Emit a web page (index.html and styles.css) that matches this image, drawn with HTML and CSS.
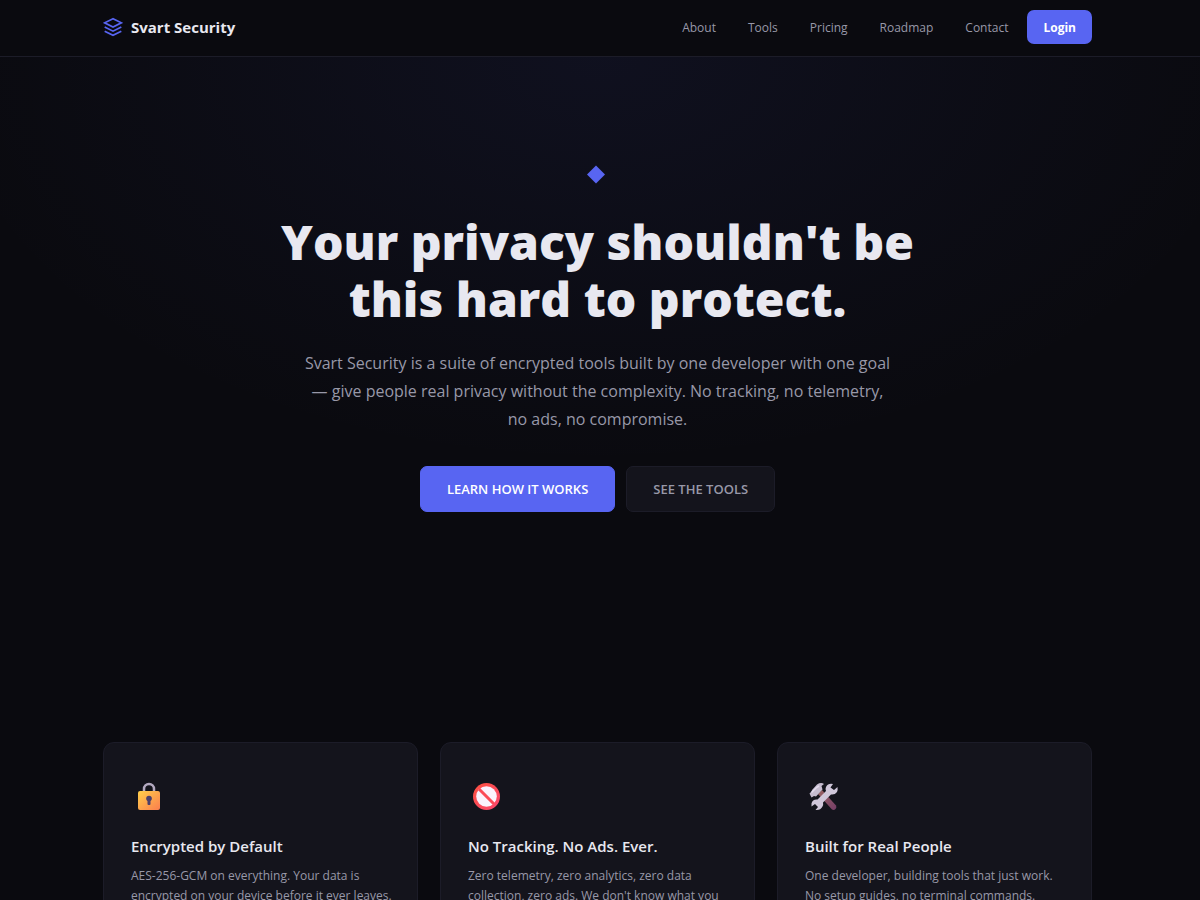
FILE: index.html
```html
<!DOCTYPE html>
<html lang="en">
<head>
  <meta charset="UTF-8">
  <meta name="viewport" content="width=device-width, initial-scale=1.0">
  <title>Svart Security</title>
  <link rel="stylesheet" href="styles.css">
</head>
<body>
  <nav class="nav">
    <div class="nav-inner">
      <a href="#" class="logo">
        <svg width="20" height="20" viewBox="0 0 24 24" fill="none" stroke="currentColor" stroke-width="2" aria-hidden="true">
          <path d="M12 2L2 7l10 5 10-5-10-5z"/>
          <path d="M2 12l10 5 10-5"/>
          <path d="M2 17l10 5 10-5"/>
        </svg>
        <span>Svart Security</span>
      </a>
      <div class="nav-links">
        <a href="#about">About</a>
        <a href="#tools">Tools</a>
        <a href="#pricing">Pricing</a>
        <a href="#roadmap">Roadmap</a>
        <a href="#contact">Contact</a>
        <a href="#login" class="nav-login">Login</a>
      </div>
    </div>
  </nav>

  <header class="hero">
    <svg class="hero-mark" width="24" height="20" viewBox="0 0 24 20" aria-hidden="true">
      <path d="M10 0.500l9 9-9 9-9-9z" fill="currentColor"/>
    </svg>
    <h1>Your privacy shouldn't be this hard to protect.</h1>
    <p>Svart Security is a suite of encrypted tools built by one developer with one goal — give people real privacy without the complexity. No tracking, no telemetry, no ads, no compromise.</p>
    <div class="hero-actions">
      <a href="#about" class="btn btn-primary">Learn how it works</a>
      <a href="#tools" class="btn btn-ghost">See the tools</a>
    </div>
  </header>

  <section class="features" id="about">
    <article class="card">
      <svg class="card-icon" width="36" height="36" viewBox="0 0 36 36" aria-hidden="true">
        <defs>
          <linearGradient id="lockBody" x1="0" y1="0" x2="1" y2="1">
            <stop offset="0" stop-color="#ffcf4a"/>
            <stop offset="1" stop-color="#fb7d4e"/>
          </linearGradient>
        </defs>
        <path d="M13 14v-4a5 5 0 0 1 10 0v4" fill="none" stroke="#b3a9c0" stroke-width="2.500"/>
        <rect x="7" y="12" width="22" height="19" rx="2" fill="url(#lockBody)"/>
        <circle cx="18" cy="19.500" r="2.800" fill="#4a3f6b"/>
        <rect x="16.500" y="20" width="3" height="6" rx="1" fill="#4a3f6b"/>
      </svg>
      <h3>Encrypted by Default</h3>
      <p>AES-256-GCM on everything. Your data is encrypted on your device before it ever leaves.</p>
    </article>
    <article class="card">
      <svg class="card-icon" width="36" height="36" viewBox="0 0 36 36" aria-hidden="true">
        <defs>
          <linearGradient id="banRing" x1="0" y1="0" x2="1" y2="1">
            <stop offset="0" stop-color="#ff5240"/>
            <stop offset="1" stop-color="#f9456f"/>
          </linearGradient>
        </defs>
        <circle cx="18.500" cy="17.500" r="13.5" fill="url(#banRing)"/>
        <circle cx="18.500" cy="17.500" r="10.3" fill="#fbf2fd"/>
        <path d="M11 10l15 15" stroke="#fb4a57" stroke-width="3"/>
      </svg>
      <h3>No Tracking. No Ads. Ever.</h3>
      <p>Zero telemetry, zero analytics, zero data collection, zero ads. We don't know what you</p>
    </article>
    <article class="card">
      <svg class="card-icon" width="36" height="36" viewBox="0 0 36 36" aria-hidden="true">
        <defs>
          <linearGradient id="handle" x1="0" y1="0" x2="1" y2="1">
            <stop offset="0" stop-color="#9a6463"/>
            <stop offset="1" stop-color="#753d66"/>
          </linearGradient>
        </defs>
        <path d="M13 15l4-4 14 15.500q1 2-.5 3.500t-3.500.5z" fill="url(#handle)"/>
        <path d="M4.500 14.500l2-2 .5-1.500 5-5.500q4-2.500 7-.5l-2.500 2 1 3.500-6.500 7-2-.5-2.500 1.500z" fill="#c6bccf"/>
        <path d="M6.500 13.500l5-5 2.500-1.500" fill="none" stroke="#e4dced" stroke-width="1.500"/>
        <path d="M28 5q-5-1-7 3-1 2 0 4l-8.500 8.500q-5-.5-6 4v3l3.500-2.500 3 3-2.500 3q5 .5 7-3.500 1-2 .5-4l8-8q4 .5 6-2.500 1-2 .5-5l-3.500 3-3.500-2.500z" fill="#d0c7da"/>
      </svg>
      <h3>Built for Real People</h3>
      <p>One developer, building tools that just work. No setup guides, no terminal commands.</p>
    </article>
  </section>
</body>
</html>
```
FILE: styles.css
```css
:root {
  --bg: #0a0a0f;
  --surface: #14141c;
  --border: #1c1c28;
  --text: #e8e8f0;
  --muted: #9898a8;
  --accent: #5865f2;
  --gutter: 5px; /* room for the thin scrollbar */
}

* {
  margin: 0;
  padding: 0;
  box-sizing: border-box;
}

body {
  font-family: "Segoe UI", "Open Sans", "Noto Sans", sans-serif;
  background: var(--bg);
  color: var(--text);
}

a {
  color: inherit;
  text-decoration: none;
}

/* Navigation */
.nav {
  padding: 0 var(--gutter) 2px 0;
  background: var(--bg);
  border-bottom: 1px solid var(--border);
}

.nav-inner {
  display: flex;
  justify-content: space-between;
  align-items: center;
  max-width: 989px;
  height: 54px;
  margin: 0 auto;
}

.logo {
  display: flex;
  align-items: center;
  gap: 8px;
  font-size: 15px;
  font-weight: 700;
  line-height: 20px;
}

.logo svg {
  color: var(--accent);
}

.nav-links {
  display: flex;
  align-items: center;
  font-size: 12px;
  line-height: 18px;
  color: var(--muted);
}

.nav-links a {
  padding: 9px 16px 7px;
}

.nav-links .nav-login {
  margin-left: 3px;
  background: var(--accent);
  color: #fff;
  font-weight: 700;
  border-radius: 7px;
}

/* Hero */
.hero {
  display: flex;
  flex-direction: column;
  align-items: center;
  padding: 108px var(--gutter) 114px 0;
  text-align: center;
  background: radial-gradient(ellipse 56% 72% at 50% 0%, rgba(88, 101, 242, 0.07) 0%, transparent 100%);
}

.hero-mark {
  color: var(--accent);
}

.hero h1 {
  max-width: 680px;
  margin-top: 28px;
  font-size: 48px;
  font-weight: 800;
  line-height: 57px;
}

.hero p {
  max-width: 592px;
  margin-top: 22px;
  font-size: 16px;
  line-height: 28px;
  color: var(--muted);
}

.hero-actions {
  display: flex;
  gap: 11px;
  margin-top: 33px;
}

.btn {
  padding: 13px 26px;
  border: 1px solid var(--border);
  border-radius: 7px;
  font-size: 13px;
  font-weight: 600;
  line-height: 18px;
  text-transform: uppercase;
}

.btn-primary {
  background: var(--accent);
  border-color: var(--accent);
  color: #fff;
}

.btn-ghost {
  background: var(--surface);
  color: var(--muted);
}

/* Feature cards */
.features {
  padding: 116px var(--gutter) 116px 0;
  display: grid;
  grid-template-columns: repeat(3, minmax(0, 315px));
  justify-content: center;
  gap: 22px;
}

.card {
  padding: 36px 20px 28px 27px;
  background: var(--surface);
  border: 1px solid var(--border);
  border-radius: 11px;
}

.card-icon {
  display: block;
}

.card h3 {
  margin-top: 20px;
  font-size: 15px;
  font-weight: 600;
  line-height: 22px;
}

.card p {
  margin-top: 9px;
  font-size: 12px;
  line-height: 20px;
  color: var(--muted);
}
```
